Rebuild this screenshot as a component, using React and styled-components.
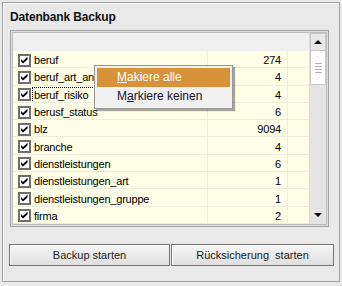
import React from 'react';
import styled, { createGlobalStyle } from 'styled-components';

const GlobalStyle = createGlobalStyle`
  html, body { margin: 0; padding: 0; background: #e9e9e9; }
  body { font-family: "Liberation Sans", Arial, sans-serif; font-size: 11px; color: #000; }
`;

const Page = styled.div`
  padding: 2px;
`;

const GroupBox = styled.section`
  box-sizing: border-box;
  width: 338px;
  height: 280px;
  border: 1px solid #a2a2a2;
  box-shadow: inset 1px 1px 0 #fbfbfb;
  display: flex;
  flex-direction: column;
  align-items: flex-start;
  padding: 7px 0 0 6px;
`;

const Title = styled.h1`
  margin: 0 0 0 1px;
  font-size: 12px;
  line-height: 14px;
  font-weight: bold;
  letter-spacing: -0.15px;
  color: #111;
`;

const ListFrame = styled.div`
  position: relative;
  box-sizing: border-box;
  width: 319px;
  height: 197px;
  margin: 6px 0 0 1px;
  border: 1px solid #a3a3a3;
  padding: 1px;
  background: #dedede;
`;

const ListInner = styled.div`
  box-sizing: border-box;
  height: 100%;
  border: 1px solid #bdbdbd;
  display: grid;
  grid-template-columns: 1fr 17px;
  overflow: hidden;
`;

const Table = styled.div`
  display: grid;
  grid-template-rows: 18px repeat(10, minmax(0, 1fr));
  min-height: 0;
`;

const HeaderRow = styled.div`
  background: #f0f0f0;
`;

const Row = styled.div`
  display: grid;
  grid-template-columns: 194px 80px 1fr;
  background: #fffee6;
  border-bottom: 1px solid #ededde;
  box-sizing: border-box;
  min-height: 0;
  overflow: hidden;
`;

const Cell = styled.div`
  box-sizing: border-box;
  display: flex;
  align-items: center;
  min-height: 0;
  padding-top: 2px;
  line-height: 14px;
  border-left: ${p => (p.$first ? 'none' : '1px solid #ececdf')};
  justify-content: ${p => (p.$right ? 'flex-end' : 'flex-start')};
  padding-left: ${p => (p.$first ? '5px' : '0')};
  padding-right: ${p => (p.$right ? '6px' : '0')};
  letter-spacing: -0.2px;
  white-space: nowrap;
  overflow: hidden;
`;

const Label = styled.span`
  margin-left: 1px;
  padding: 0 ${p => (p.$focused ? '10px' : '1px')} 0 1px;
  border: 1px ${p => (p.$focused ? 'dotted #000' : 'solid transparent')};
`;

const ScrollBar = styled.div`
  display: flex;
  flex-direction: column;
  background: #e4e4e4;
  border-left: 1px solid #dcdcdc;
`;

const ArrowButton = styled.div`
  box-sizing: border-box;
  height: 18px;
  display: flex;
  align-items: center;
  justify-content: center;
  border: ${p => (p.$framed ? '1px solid #c6c6c6' : 'none')};
  background: ${p => (p.$framed ? '#e8e8e8' : 'transparent')};
  margin-top: ${p => (p.$down ? 'auto' : '0')};
`;

const Triangle = styled.span`
  width: 0;
  height: 0;
  border-left: 4px solid transparent;
  border-right: 4px solid transparent;
  ${p => (p.$down ? 'border-top: 4px solid #000;' : 'border-bottom: 4px solid #000;')}
`;

const Thumb = styled.div`
  box-sizing: border-box;
  height: 34px;
  background: #fff;
  border: 1px solid #c9c9c9;
  border-top: none;
  display: flex;
  flex-direction: column;
  align-items: center;
  justify-content: center;
  gap: 2px;
`;

const Grip = styled.span`
  width: 7px;
  height: 1px;
  background: #b4b4b4;
`;

const Menu = styled.ul`
  position: absolute;
  left: 83px;
  top: 34px;
  box-sizing: border-box;
  width: 139px;
  margin: 0;
  padding: 2px;
  list-style: none;
  background: #f0f0f0;
  border: 1px solid #979797;
  box-shadow: 2px 2px 1px rgba(0, 0, 0, 0.35);
  font-size: 12px;
`;

const MenuItem = styled.li`
  height: 19px;
  line-height: 19px;
  padding-left: 20px;
  background: ${p => (p.$active ? '#d8923a' : 'transparent')};
  color: ${p => (p.$active ? '#fff' : '#14142a')};
`;

const ButtonRow = styled.div`
  display: flex;
  gap: 1px;
  margin-top: 17px;
`;

const Button = styled.button`
  box-sizing: border-box;
  width: ${p => p.$w}px;
  height: 22px;
  padding: 0;
  border: 1px solid #747474;
  box-shadow: inset 1px 1px 0 #fdfdfd;
  background: linear-gradient(#f6f6f6, #dfdfdf);
  font-family: "Liberation Sans", Arial, sans-serif;
  font-size: 11px;
  color: #1a1a1a;
  white-space: pre;
`;

const CheckBox = () => (
  <svg width="13" height="13" viewBox="0 0 13 13" style={{ flex: 'none' }}>
    <rect x="1" y="1" width="11" height="11" fill="#fff" stroke="#6e6e6e" strokeWidth="2" />
    <polygon points="3,5 5,7 9.5,2.8 9.5,5.4 5,9.6 3,7.6" fill="#000" />
  </svg>
);

const rows = [
  ['beruf', '274'],
  ['beruf_art_anstellung', '4'],
  ['beruf_risiko', '4', true],
  ['berusf_status', '6'],
  ['blz', '9094'],
  ['branche', '4'],
  ['dienstleistungen', '6'],
  ['dienstleistungen_art', '1'],
  ['dienstleistungen_gruppe', '1'],
  ['firma', '2'],
];

export default function App() {
  return (
    <Page>
      <GlobalStyle />
      <GroupBox>
        <Title>Datenbank Backup</Title>
        <ListFrame>
          <ListInner>
            <Table>
              <HeaderRow />
              {rows.map(([name, count, focused]) => (
                <Row key={name}>
                  <Cell $first>
                    <CheckBox />
                    <Label $focused={focused}>{name}</Label>
                  </Cell>
                  <Cell $right>{count}</Cell>
                  <Cell />
                </Row>
              ))}
            </Table>
            <ScrollBar>
              <ArrowButton $framed>
                <Triangle />
              </ArrowButton>
              <Thumb>
                <Grip />
                <Grip />
                <Grip />
                <Grip />
              </Thumb>
              <ArrowButton $down>
                <Triangle $down />
              </ArrowButton>
            </ScrollBar>
          </ListInner>
          <Menu>
            <MenuItem $active>
              <u>M</u>akiere alle
            </MenuItem>
            <MenuItem>
              M<u>a</u>rkiere keinen
            </MenuItem>
          </Menu>
        </ListFrame>
        <ButtonRow>
          <Button $w={161}>Backup starten</Button>
          <Button $w={163}>{'Rücksicherung  starten'}</Button>
        </ButtonRow>
      </GroupBox>
    </Page>
  );
}
